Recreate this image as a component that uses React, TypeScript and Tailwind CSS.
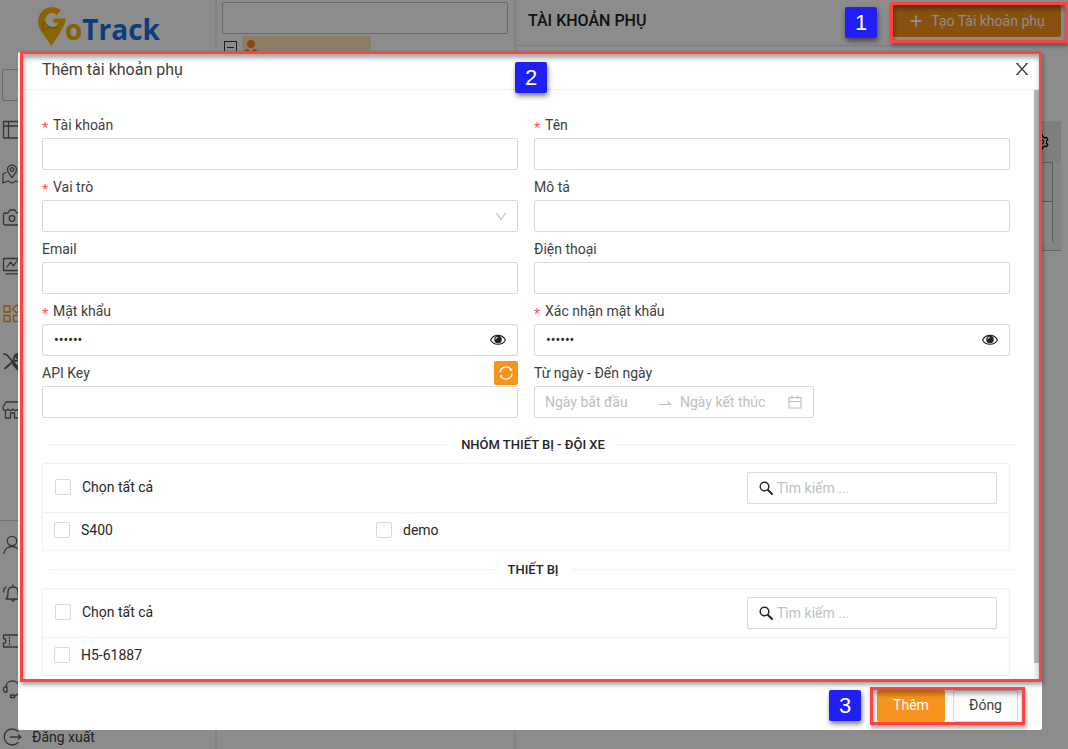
import React from "react";
import { AiOutlineSetting } from "react-icons/ai";

type IconProps = { children: React.ReactNode; size?: number };

function LineIcon({ children, size = 20 }: IconProps) {
  return (
    <svg
      width={size}
      height={size}
      viewBox="0 0 20 20"
      fill="none"
      stroke="currentColor"
      strokeWidth="1.3"
      strokeLinecap="round"
      strokeLinejoin="round"
      aria-hidden="true"
      className="shrink-0"
    >
      {children}
    </svg>
  );
}

const menuTop = [
  {
    name: "layout",
    icon: (
      <LineIcon>
        <path d="M1.500 1.500h18.500v16.500H1.500zM6.500 1.500v16.500M1.500 6H20" />
      </LineIcon>
    ),
  },
  {
    name: "map",
    icon: (
      <LineIcon>
        <path d="M10 13.500C7 10 5.500 8 5.500 5.500a4.500 4.500 0 0 1 9 0C14.500 8 13 10 10 13.500zM4 8.500 1 10v9l5-2 4 2 4-2 5 2v-9l-3-1.500" />
        <circle cx="10" cy="5.500" r="1.800" />
      </LineIcon>
    ),
  },
  {
    name: "camera",
    icon: (
      <LineIcon>
        <path d="M3 5h3l2-3h5l2 3h4v12H3Q1.500 17 1.500 15.500v-9Q1.500 5 3 5z" />
        <circle cx="10" cy="10.500" r="2.800" />
      </LineIcon>
    ),
  },
];

const menuMiddle = [
  {
    name: "monitor",
    active: false,
    icon: (
      <LineIcon>
        <path d="M19.500 14.500H1.500v-12h18M5 11l3.500-5 3 4 4-6M4 17.800h16" />
      </LineIcon>
    ),
  },
  {
    name: "apps",
    active: true,
    icon: (
      <LineIcon>
        <path d="M2 2h6v6H2zM2 11.500h6v6H2zM11.500 11.500h6v6h-6zM14.500 1l4 4-4 4-4-4z" />
      </LineIcon>
    ),
  },
  {
    name: "tools",
    active: false,
    icon: (
      <LineIcon>
        <path d="m2 2 3 1 6 7M3 16.500 12 8.500" strokeWidth="1.800" />
        <path d="m12 12 4 4.500" strokeWidth="3.600" />
        <path d="M12 8c-1-3 1-6 4-6l-2 3 1 1 3-2c0 4-3 5-5 5" strokeWidth="1.800" />
      </LineIcon>
    ),
  },
  {
    name: "store",
    active: false,
    icon: (
      <LineIcon>
        <path d="M4 2h13l3 5v2c-1 2-3 2-4 0-1 2-4 2-5 0-1 2-4 2-5 0-1 2-4 2-5 0V7zM3.500 11v7h5v-5h4v5h5v-7" />
      </LineIcon>
    ),
  },
];

const menuBottom = [
  {
    name: "user",
    label: "",
    icon: (
      <LineIcon>
        <circle cx="10" cy="6" r="4.700" />
        <path d="M2 18.500c.5-4 3.500-7 8-7s7.500 3 8 7" />
      </LineIcon>
    ),
  },
  {
    name: "bell",
    label: "",
    icon: (
      <LineIcon>
        <path d="M4 16h14c-2-2-2-3-2-7 0-3-2-5-5-5s-5 2-5 5c0 4 0 5-2 7zM9.500 16.500c0 2 3 2 3 0M11 2v2M4 4C2 5 1.500 7 1.500 9" />
      </LineIcon>
    ),
  },
  {
    name: "ticket",
    label: "",
    icon: (
      <LineIcon>
        <path d="M1.500 4H20v12H1.500v-3.500c3 0 3-5 0-5z" />
        <path d="M7.500 6.500v1M7.500 9.500v1M7.500 12.500v1" />
      </LineIcon>
    ),
  },
  {
    name: "support",
    label: "",
    icon: (
      <LineIcon>
        <path d="M4 8c0-8 13-8 13 0v4c0 3-2 4-4 5M4 8H2.500C1 9 1 12 2.500 13H5V8zM17 8v5M8.500 16h4v2.500h-4z" />
      </LineIcon>
    ),
  },
  {
    name: "logout",
    label: "Đăng xuất",
    icon: (
      <LineIcon>
        <path d="M16 15.500A8 8 0 1 1 16 4.500M8.500 10H19M16.500 8l2.500 2-2.500 2" />
      </LineIcon>
    ),
  },
];

function Logo() {
  return (
    <div className="flex h-[52px] items-start pt-[7px] pl-[38px]">
      <svg width="28" height="39" viewBox="0 0 28 39" aria-hidden="true" className="shrink-0">
        <path
          d="M23 3.500C18-1 8-1 3.500 5-1.500 11.500-.5 18 3 24L13.500 39 23 24c3-5 4.500-8 4.500-12.500H15.500v4.200h5c-1.500 4-6.500 6-10 3.300C6 16 6.500 9.500 10.500 7c3-1.800 6-1.200 8 1.300z"
          fill="#f9b700"
        />
        <path d="M5 15v9l7-4 8 1M12 20l-6-5" fill="none" stroke="#a87500" strokeWidth="0.6" />
      </svg>
      <span className="-ml-px mt-[5px] font-['Open_Sans',sans-serif] text-[28px] leading-[34px] font-bold">
        <span className="text-[#f0b000]">o</span>
        <span className="text-[#1a6fe0]">Track</span>
      </span>
    </div>
  );
}

function Sidebar() {
  return (
    <nav className="w-[217px] shrink-0 overflow-hidden border-r-2 border-[#ededed] text-[#606060]">
      <Logo />
      <div className="pt-[17px] pr-3 pb-[7px] pl-[2px]">
        <input aria-label="Tìm menu" className="block h-8 w-full rounded-xs border border-[#bfbfbf] bg-white" />
      </div>
      <ul>
        {menuTop.map((m) => (
          <li key={m.name} className="flex h-11 items-center pl-[2px]">
            {m.icon}
          </li>
        ))}
      </ul>
      <ul className="pt-[2px]">
        {menuMiddle.map((m) => (
          <li
            key={m.name}
            className={m.active ? "flex h-12 items-center pl-[2px] text-[#f7941d]" : "flex h-12 items-center pl-[2px]"}
          >
            {m.icon}
          </li>
        ))}
      </ul>
      <ul className="mt-[86px] border-t border-[#d0d0d0]">
        {menuBottom.map((m) => (
          <li key={m.name} className="flex h-12 items-center gap-[10px] pl-[2px]">
            {m.icon}
            {m.label && <span className="text-[14px] text-[#404040]">{m.label}</span>}
          </li>
        ))}
      </ul>
    </nav>
  );
}

function Background() {
  return (
    <div className="flex h-screen overflow-hidden">
      <Sidebar />
      <section className="w-[299px] shrink-0 border-r-2 border-[#ededed] pt-[2px] pr-[6px] pl-[5px]">
        <input aria-label="Tìm tài khoản" className="block h-8 w-full rounded-xs border border-[#bfbfbf] bg-white" />
        <div className="flex pt-[2px] pl-[2px]">
          <span className="mt-[5px] mr-[5px] flex size-[13px] items-center justify-center border border-[#333]">
            <span className="h-px w-[7px] bg-[#333]" />
          </span>
          <span className="flex h-6 w-[129px] items-start rounded-xs bg-[#ffe6ba] pt-[4px] pl-[2px]">
            <svg width="14" height="16" viewBox="0 0 14 16" fill="#f7841d" aria-hidden="true">
              <circle cx="7" cy="4" r="4" />
              <path d="M0 16c0-5 1-7 4-7l3 3 3-3c3 0 4 2 4 7z" />
            </svg>
          </span>
        </div>
      </section>
      <main className="min-w-0 flex-1">
        <header className="flex h-[46px] items-start justify-between border-b border-[#e4e4e4] pt-[5px] pr-[7px] pl-3">
          <h1 className="text-[16px] leading-8 font-medium text-[#202020]">TÀI KHOẢN PHỤ</h1>
          <button className="flex h-8 w-[168px] items-center justify-center gap-2 rounded-xs bg-[#f7941d] text-[14px] text-white">
            <svg width="14" height="14" viewBox="0 0 14 14" stroke="currentColor" strokeWidth="1.800" aria-hidden="true">
              <path d="M7 1.500v11M1.500 7h11" />
            </svg>
            Tạo Tài khoản phụ
          </button>
        </header>
        <div className="mt-[75px] mr-[7px] border-b border-[#b8b8b8] bg-[#f0f0f0]">
          <div className="flex h-[41px] items-center justify-end bg-[#e6e6e6] pr-[11px] text-black">
            <AiOutlineSetting size={18} />
          </div>
          <div className="mr-[8px] h-10 border border-[#a8a8a8] bg-[#e9e9e9]" />
          <div className="mr-[8px] h-10 border-r border-[#a8a8a8] bg-[#f8f8f8]" />
          <div className="h-2" />
        </div>
      </main>
    </div>
  );
}

function Label({ id, text, required }: { id: string; text: string; required?: boolean }) {
  return (
    <label htmlFor={id} className="flex items-center text-[14px] leading-[22px] text-[#404040]">
      {required && (
        <span className="w-[11px] pt-2 font-['Liberation_Sans',sans-serif] text-[16px] leading-[18px] text-[#ff4d4f]">*</span>
      )}
      {text}
    </label>
  );
}

type FieldProps = {
  id: string;
  label: string;
  required?: boolean;
  extra?: React.ReactNode;
  children: React.ReactNode;
};

function Field({ id, label, required, extra, children }: FieldProps) {
  return (
    <div>
      <div className="flex h-[30px] items-center justify-between pt-1">
        <Label id={id} text={label} required={required} />
        {extra}
      </div>
      {children}
    </div>
  );
}

const inputClass = "block h-8 w-full rounded-xs border border-[#d9d9d9] bg-white px-[11px] text-[14px] text-[#262626] outline-none";

function Password({ id }: { id: string }) {
  return (
    <div className="flex h-8 items-center rounded-xs border border-[#d9d9d9] pr-[11px] pl-[11px]">
      <input
        id={id}
        type="password"
        defaultValue="123456"
        className="h-full min-w-0 flex-1 bg-transparent text-[14px] text-[#262626] outline-none"
      />
      <button type="button" aria-label="Hiện mật khẩu" className="text-[#202020]">
        <svg width="16" height="16" viewBox="0 0 16 16" fill="none" aria-hidden="true">
          <path d="M.6 8C3.500 1.800 12.500 1.800 15.400 8 12.500 13.700 3.500 13.700.6 8z" stroke="currentColor" strokeWidth="1.100" />
          <circle cx="8" cy="7.500" r="3.800" fill="currentColor" />
          <path d="M5.800 7.200A2 2 0 0 1 7.800 5.200" stroke="#fff" strokeWidth="1" />
        </svg>
      </button>
    </div>
  );
}

function DateRange() {
  return (
    <div className="flex h-8 w-[280px] items-center rounded-xs border border-[#d9d9d9] pr-[11px] pl-[10px]">
      <input
        id="date"
        placeholder="Ngày bắt đầu"
        className="w-[113px] bg-transparent text-[14px] outline-none placeholder:text-[#bfbfbf]"
      />
      <svg width="14" height="14" viewBox="0 0 14 14" fill="none" stroke="#bfbfbf" strokeWidth="1.100" aria-hidden="true">
        <path d="M1 9.500h11.500L9.500 6.500" />
      </svg>
      <input
        aria-label="Ngày kết thúc"
        placeholder="Ngày kết thúc"
        className="ml-2 w-[108px] bg-transparent text-[14px] outline-none placeholder:text-[#bfbfbf]"
      />
      <svg width="14" height="14" viewBox="0 0 14 14" fill="none" stroke="#bfbfbf" strokeWidth="1.100" aria-hidden="true" className="shrink-0">
        <path d="M1 2.500h12v10.500H1zM1 6.500h12M4 .5v3.500M10 .5v3.500" />
      </svg>
    </div>
  );
}

function Divider({ title }: { title: string }) {
  return (
    <div className="-mr-[6px] ml-2 flex h-[37px] items-center gap-[13px]">
      <span className="h-px flex-1 bg-[#f0f0f0]" />
      <h3 className="text-[13px] leading-5 font-medium text-[#262626]">{title}</h3>
      <span className="h-px flex-1 bg-[#f0f0f0]" />
    </div>
  );
}

function Check({ text }: { text: string }) {
  return (
    <label className="mb-[2px] flex items-center gap-[11px] text-[14px] leading-[22px] text-[#262626]">
      <input type="checkbox" className="size-4 appearance-none rounded-xs border border-[#d9d9d9] bg-white" />
      {text}
    </label>
  );
}

function CheckGroup({ name, items }: { name: string; items: string[] }) {
  return (
    <div className="rounded-xs border border-[#f0f0f0]">
      <div className="flex h-[49px] items-center justify-between border-b border-[#f0f0f0] px-3">
        <Check text="Chọn tất cả" />
        <div className="flex h-8 w-[250px] items-center gap-1 rounded-xs border border-[#d9d9d9] px-[11px]">
          <svg width="14" height="14" viewBox="0 0 14 14" fill="none" stroke="#262626" strokeLinecap="round" aria-hidden="true" className="shrink-0">
            <circle cx="5.500" cy="5.500" r="4.300" strokeWidth="1.500" />
            <path d="m9 9 4 4" strokeWidth="2" />
          </svg>
          <input
            aria-label={name}
            placeholder="Tìm kiếm ..."
            className="min-w-0 flex-1 bg-transparent text-[14px] outline-none placeholder:text-[#bfbfbf]"
          />
        </div>
      </div>
      <div className="grid h-[37px] grid-cols-3 items-center pb-[2px]">
        {items.map((t) => (
          <div key={t} className="pl-[11px]">
            <Check text={t} />
          </div>
        ))}
      </div>
    </div>
  );
}

function Badge({ n, place }: { n: number; place: string }) {
  return (
    <span
      className={
        "absolute flex h-[31px] w-8 items-center justify-center rounded-xs bg-[#2020f4] font-['Liberation_Sans',sans-serif] text-[22px] leading-none text-white shadow-[1px_3px_5px_rgba(0,0,0,0.5)] " +
        place
      }
    >
      {n}
    </span>
  );
}

function Highlight({ place }: { place: string }) {
  return (
    <span
      className={
        "pointer-events-none absolute border-3 border-[#ff4343] shadow-[1px_3px_4px_rgba(0,0,0,0.35),inset_1px_4px_5px_rgba(0,0,0,0.35)] " +
        place
      }
    />
  );
}

function Dialog() {
  return (
    <div role="dialog" aria-label="Thêm tài khoản phụ" className="relative rounded-xs bg-white">
      <header className="flex h-[38px] items-start justify-between border-b border-[#f0f0f0] pr-[13px] pl-6">
        <h2 className="pt-[7px] text-[16px] leading-[22px] text-[#404040]">Thêm tài khoản phụ</h2>
        <button aria-label="Đóng hộp thoại" className="mt-[10px] text-[#404040]">
          <svg width="14" height="14" viewBox="0 0 14 14" fill="none" stroke="currentColor" strokeWidth="1.300" aria-hidden="true">
            <path d="m2 1.500 10 11M12 1.500l-10 11" />
            <path d="M1 1.500h2.500M10.500 1.500H13M1 12.500h2.500M10.500 12.500H13" strokeWidth="0.800" />
          </svg>
        </button>
      </header>
      <div className="flex">
        <div className="min-w-0 flex-1 pt-[18px] pr-6 pb-[5px] pl-6">
          <form className="mb-2 grid grid-cols-2 gap-x-4">
            <Field id="account" label="Tài khoản" required>
              <input id="account" className={inputClass} />
            </Field>
            <Field id="name" label="Tên" required>
              <input id="name" className={inputClass} />
            </Field>
            <Field id="role" label="Vai trò" required>
              <div className="grid items-center">
                <select id="role" className={inputClass + " col-start-1 row-start-1 appearance-none"} />
                <svg
                  width="12"
                  height="12"
                  viewBox="0 0 12 12"
                  fill="none"
                  stroke="#bfbfbf"
                  strokeWidth="1.200"
                  aria-hidden="true"
                  className="pointer-events-none col-start-1 row-start-1 mr-[11px] justify-self-end"
                >
                  <path d="m1.500 3 4.500 6.500L10.500 3" />
                </svg>
              </div>
            </Field>
            <Field id="desc" label="Mô tả">
              <input id="desc" className={inputClass} />
            </Field>
            <Field id="email" label="Email">
              <input id="email" className={inputClass} />
            </Field>
            <Field id="phone" label="Điện thoại">
              <input id="phone" className={inputClass} />
            </Field>
            <Field id="password" label="Mật khẩu" required>
              <Password id="password" />
            </Field>
            <Field id="confirm" label="Xác nhận mật khẩu" required>
              <Password id="confirm" />
            </Field>
            <Field
              id="api"
              label="API Key"
              extra={
                <button
                  type="button"
                  aria-label="Tạo API Key"
                  className="flex size-6 items-center justify-center rounded-xs bg-[#f7941d] text-white"
                >
                  <svg width="16" height="16" viewBox="0 0 16 16" fill="none" stroke="currentColor" strokeWidth="1.200" aria-hidden="true">
                    <path d="M2 7.500A6 6 0 0 1 13.200 5M14 8.500A6 6 0 0 1 2.800 11" />
                    <path d="M13.800 3.500v2h-2zM2.200 12.500v-2h2z" fill="currentColor" strokeWidth="0.500" />
                  </svg>
                </button>
              }
            >
              <input id="api" className={inputClass} />
            </Field>
            <Field id="date" label="Từ ngày - Đến ngày">
              <DateRange />
            </Field>
          </form>
          <Divider title="NHÓM THIẾT BỊ - ĐỘI XE" />
          <CheckGroup name="Tìm nhóm thiết bị" items={["S400", "demo"]} />
          <Divider title="THIẾT BỊ" />
          <CheckGroup name="Tìm thiết bị" items={["H5-61887"]} />
        </div>
        <div className="w-2 shrink-0 bg-[#f1f1f1] pb-[18px]">
          <div className="h-full bg-[#b4b4b4]" />
        </div>
      </div>
      <footer className="flex justify-end gap-2 border-t border-[#f0f0f0] pt-2 pr-6 pb-2">
        <button className="h-8 w-[68px] rounded-xs bg-[#f7941d] pb-[2px] text-[14px] text-white">Thêm</button>
        <button className="h-8 w-[65px] rounded-xs border border-[#d9d9d9] bg-white pb-[2px] text-[14px] text-[#404040]">Đóng</button>
      </footer>
      <Highlight place="-top-px right-0 bottom-[48px] left-[2px]" />
      <Badge n={2} place="top-[10px] left-[497px]" />
      <Highlight place="right-[17px] bottom-[5px] h-[38px] w-[155px]" />
      <Badge n={3} place="right-[181px] bottom-[9px]" />
    </div>
  );
}

export default function App() {
  return (
    <div className="relative min-h-screen overflow-hidden bg-white font-[Roboto,sans-serif]">
      <Background />
      <div className="absolute inset-0 bg-black/45 pt-[52px] pr-[26px] pl-[18px]">
        <Dialog />
      </div>
      <Highlight place="top-[2px] right-0 h-[41px] w-[178px]" />
      <Badge n={1} place="top-[7px] right-[191px]" />
    </div>
  );
}
